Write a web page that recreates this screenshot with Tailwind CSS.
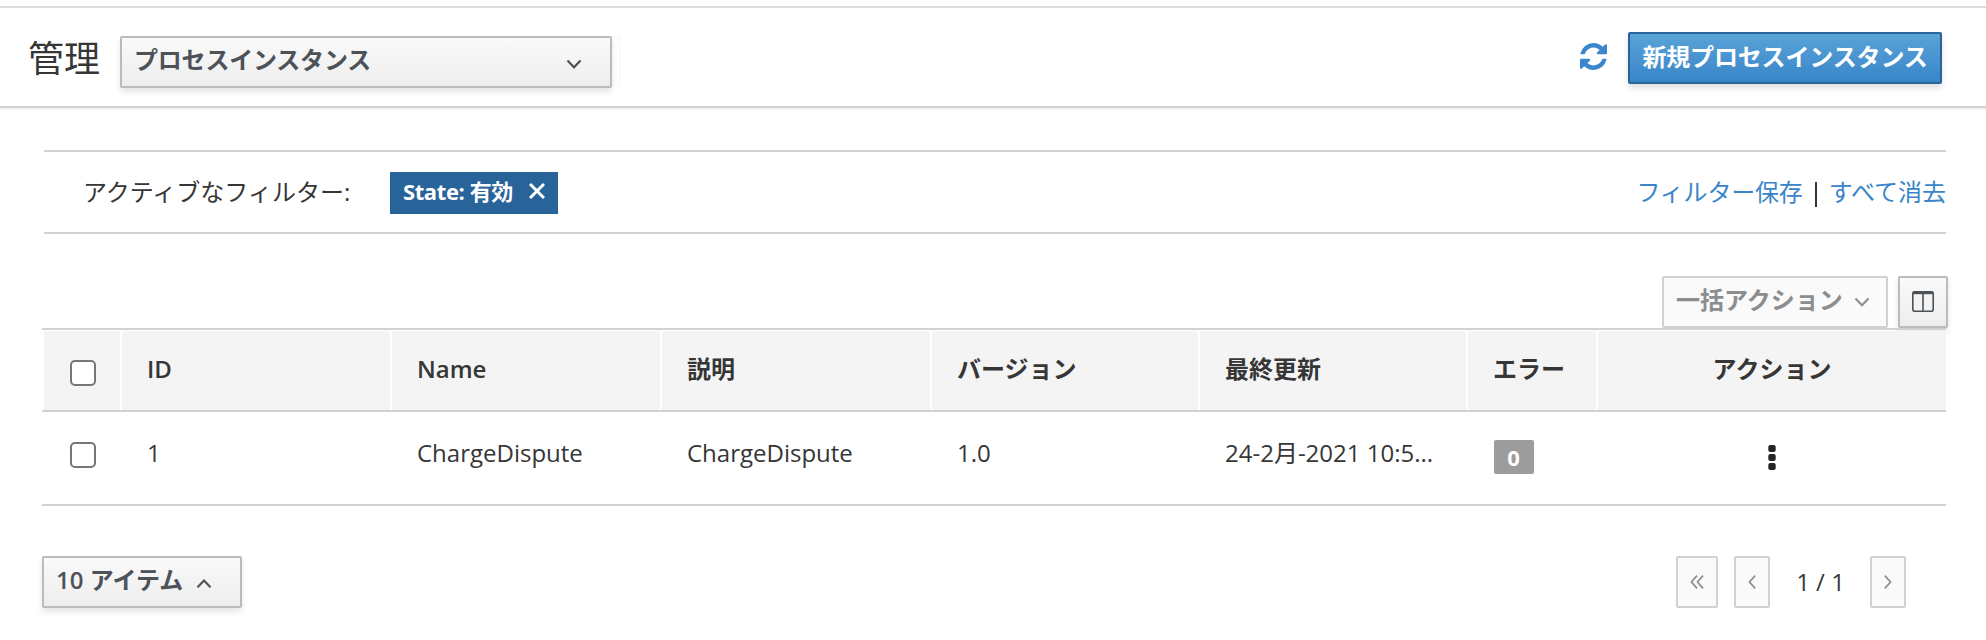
<!DOCTYPE html>
<html lang="ja">
<head>
<meta charset="utf-8">
<title>プロセスインスタンス</title>
<script src="https://cdn.jsdelivr.net/npm/@tailwindcss/browser@4"></script>
</head>
<body class="h-[640px] w-[1986px] overflow-hidden bg-white pt-[6px] font-['Open_Sans','Noto_Sans_CJK_JP',sans-serif] text-[24px] leading-[40px] text-[#363636]">
<header class="flex h-[102px] items-start border-y-2 border-t-[#dedede] border-b-[#d1d1d1] pl-[28px] pr-[44px] shadow-[0_2px_0_#f3f3f3]">
  <h1 class="mt-[26px] w-[92px] text-[36px] leading-[44px] font-normal whitespace-nowrap font-['Noto_Sans_CJK_JP',sans-serif]">管理</h1>
  <div class="mt-[28px] h-[52px] w-[500px] border-t border-r border-[#f5f5f5]">
    <button class="-mt-px flex h-[52px] w-[492px] items-start justify-between rounded-[2px] border-2 border-[#bbb] bg-linear-to-b from-[#fafafa] to-[#ededed] pl-[12px] pr-[28px] text-left font-bold text-[#4d5258] shadow-[0_4px_6px_rgba(3,3,3,0.1)]">
      <span class="mt-[2px] tracking-[-0.2px]">プロセスインスタンス</span>
      <svg class="mt-[21px]" width="16" height="11" viewBox="0 0 16 11" fill="none" stroke="#4d5258" stroke-width="2.2"><path d="M1.5 1.5 8 8.3l6.500-6.800"/></svg>
    </button>
  </div>
  <div class="ml-auto flex items-start">
    <svg class="mt-[35px] mr-[21px]" width="27" height="27" viewBox="0 0 1536 1536" fill="#3a87cb"><path d="M1511 928q0 5-1 7-64 268-268 434.500T764 1536q-146 0-282.500-55T238 1324l-129 129q-19 19-45 19t-45-19-19-45V960q0-26 19-45t45-19h448q26 0 45 19t19 45-19 45l-137 137q71 66 161 102t187 36q134 0 250-65t186-179q11-17 53-117 8-23 30-23h192q13 0 22.500 9.500t9.500 22.500zm25-800v448q0 26-19 45t-45 19h-448q-26 0-45-19t-19-45 19-45l138-138Q969 256 768 256q-134 0-250 65T332 500q-11 17-53 117-8 23-30 23H50q-13 0-22.500-9.500T18 608v-7q65-268 270-434.500T768 0q146 0 284 55.500T1297 212l130-129q19-19 45-19t45 19 19 45z"/></svg>
    <button class="mt-[24px] flex h-[52px] w-[314px] items-start justify-center rounded-[2px] border-2 border-[#286499] bg-linear-to-b from-[#59a3d8] to-[#3985c8] font-bold text-white shadow-[0_4px_6px_rgba(3,3,3,0.13)]"><span class="mt-[3px] tracking-[-0.15px]">新規プロセスインスタンス</span></button>
  </div>
</header>
<main class="pr-[40px] pl-[42px]">
  <section class="mt-[42px] ml-[2px] flex h-[84px] items-center border-y-2 border-[#d1d1d1] pl-[39px]">
    <span class="w-[307px] whitespace-nowrap">アクティブなフィルター:</span>
    <span class="mt-[2px] flex h-[42px] w-[168px] items-center justify-between bg-[#286499] pr-[13px] pl-[13px] text-[22px] leading-[40px] font-bold text-white"><span class="-mt-[5px] whitespace-nowrap tracking-[-0.4px]">State: 有効</span><svg class="-mt-[5px]" width="16" height="16" viewBox="0 0 16 16" stroke="#fff" stroke-width="3"><path d="m1 1 14 14M15 1 1 15"/></svg></span>
    <span class="ml-auto flex gap-[10px] whitespace-nowrap"><a class="tracking-[-0.2px] text-[#3985c8]">フィルター保存</a><span class="flex h-[40px] w-[6px] items-center justify-center"><span class="mt-[4px] h-[25px] w-[2px] bg-[#363636]"></span></span><a class="text-[#3985c8]">すべて消去</a></span>
  </section>
  <div class="-mr-[2px] mt-[42px] flex h-[52px] justify-end gap-[10px]">
    <button class="flex h-[52px] w-[226px] items-start rounded-[2px] border-2 border-[#d1d1d1] bg-[#fafafa] pl-[12px] font-bold text-[#8b8d8f]"><span class="mt-[2px] w-[178px] text-left">一括アクション</span><svg class="mt-[19px]" width="16" height="11" viewBox="0 0 16 11" fill="none" stroke="#8b8d8f" stroke-width="2"><path d="M1.500 1.500 8 8.300l6.500-6.800"/></svg></button>
    <button class="relative flex h-[52px] w-[50px] items-center justify-center rounded-[2px] border-2 border-[#bbb] bg-linear-to-b from-[#fafafa] to-[#ededed] shadow-[0_4px_6px_rgba(3,3,3,0.1)]"><svg class="-mt-px" width="22" height="21" viewBox="0 0 22 21" fill="none" stroke="#4d5258" stroke-width="1.600"><rect x=".8" y=".8" width="20.400" height="19.400" rx="2"/><path d="M11 2v18"/><path stroke-width="3" d="M1 1.700h20"/></svg></button>
  </div>
  <div class="relative">
    <div class="grid h-[84px] grid-cols-[80px_270px_270px_270px_268px_268px_130px_348px] border-y-2 border-[#d1d1d1] font-semibold">
      <div class="mt-px border-x-2 border-white bg-[#f4f4f4] pt-[29px] pl-[26px]"><input type="checkbox" class="block size-[26px] appearance-none rounded-[5px] border-2 border-[#767676] bg-white"></div>
      <div class="mt-px border-r-2 border-white bg-[#f4f4f4] pt-[18px] pl-[25px]">ID</div>
      <div class="mt-px border-r-2 border-white bg-[#f4f4f4] pt-[18px] pl-[25px]">Name</div>
      <div class="mt-px border-r-2 border-white bg-[#f4f4f4] pt-[18px] pl-[25px] font-bold">説明</div>
      <div class="mt-px border-r-2 border-white bg-[#f4f4f4] pt-[18px] pl-[25px] font-bold">バージョン</div>
      <div class="mt-px border-r-2 border-white bg-[#f4f4f4] pt-[18px] pl-[25px] font-bold">最終更新</div>
      <div class="mt-px border-r-2 border-white bg-[#f4f4f4] pt-[18px] pl-[25px] font-bold">エラー</div>
      <div class="mt-px bg-[#f4f4f4] pt-[18px] text-center font-bold">アクション</div>
    </div>
    <div class="grid h-[94px] grid-cols-[80px_270px_270px_270px_268px_268px_130px_348px] border-b-2 border-[#d1d1d1]">
      <div class="pt-[30px] pl-[28px]"><input type="checkbox" class="block size-[26px] appearance-none rounded-[5px] border-2 border-[#767676] bg-white"></div>
      <div class="pt-[21px] pl-[25px]">1</div>
      <div class="pt-[21px] pl-[25px]">ChargeDispute</div>
      <div class="pt-[21px] pl-[25px]">ChargeDispute</div>
      <div class="pt-[21px] pl-[25px]">1.0</div>
      <div class="pt-[21px] pl-[25px] whitespace-nowrap">24-2月-2021 10:5...</div>
      <div class="pt-[28px] pl-[26px]"><div class="h-[34px] w-[40px] rounded-[2px] bg-[#9c9c9c] pr-px text-center text-[22px] leading-[34px] font-bold text-white">0</div></div>
      <div class="flex justify-center pt-[33px]"><svg width="8" height="25" viewBox="0 0 8 25" fill="#252525"><rect x=".3" width="7.400" height="7" rx="2"/><rect x=".3" y="9" width="7.400" height="7" rx="2"/><rect x=".3" y="18" width="7.400" height="7" rx="2"/></svg></div>
    </div>
  </div>
  <footer class="mt-[50px] flex items-start pr-[40px]">
    <button class="flex h-[52px] w-[200px] items-start rounded-[2px] border-2 border-[#bbb] bg-linear-to-b from-[#fafafa] to-[#ededed] pl-[12px] font-semibold text-[#4d5258] shadow-[0_4px_6px_rgba(3,3,3,0.1)]"><span class="mt-[2px] w-[140px] text-left whitespace-nowrap">10 <span class="font-bold">アイテム</span></span><svg class="mt-[20px]" width="16" height="11" viewBox="0 0 16 11" fill="none" stroke="#4d5258" stroke-width="2.200"><path d="M1.500 9.300 8 2.500l6.500 6.800"/></svg></button>
    <div class="ml-auto flex items-start">
      <button class="flex h-[52px] w-[42px] items-center justify-center rounded-[2px] border-2 border-[#d1d1d1] bg-[#fafafa]"><svg width="14" height="14" viewBox="0 0 14 14" fill="none" stroke="#8b8d8f" stroke-width="1.700"><path d="M7 .6 1.500 7 7 13.400M13 .6 7.500 7l5.500 6.400"/></svg></button>
      <button class="ml-[16px] flex h-[52px] w-[36px] items-center justify-center rounded-[2px] border-2 border-[#d1d1d1] bg-[#fafafa]"><svg width="8" height="14" viewBox="0 0 8 14" fill="none" stroke="#8b8d8f" stroke-width="1.700"><path d="M7.200.6 1.400 7l5.800 6.400"/></svg></button>
      <span class="mt-[6px] w-[100px] pl-[1px] text-center">1 / 1</span>
      <button class="flex h-[52px] w-[36px] items-center justify-center rounded-[2px] border-2 border-[#d1d1d1] bg-[#fafafa]"><svg width="8" height="14" viewBox="0 0 8 14" fill="none" stroke="#8b8d8f" stroke-width="1.700"><path d="m.8.6 5.800 6.400-5.800 6.400"/></svg></button>
    </div>
  </footer>
</main>
</body>
</html>
